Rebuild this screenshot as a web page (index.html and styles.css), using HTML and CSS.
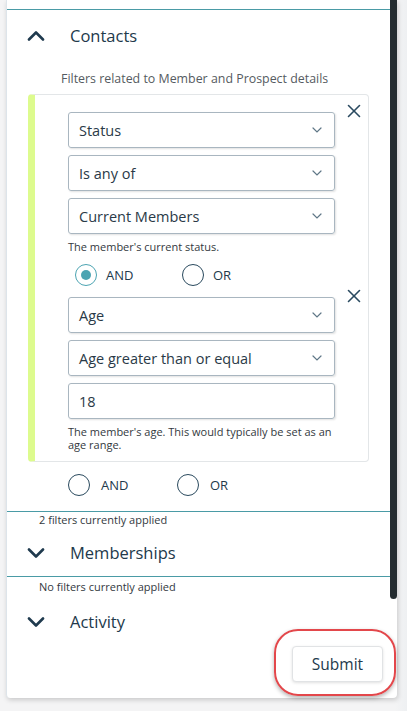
FILE: index.html
```html
<!DOCTYPE html>
<html>
<head>
<meta charset="utf-8">
<link rel="stylesheet" href="styles.css">
</head>
<body>
<div class="panel">
  <div class="top-gap"></div>

  <section class="section">
    <div class="sec-head">
      <svg class="chev" width="18" height="11" viewBox="0 0 18 11"><polyline points="2,9.5 9,2.5 16,9.5" /></svg>
      <span class="sec-title">Contacts</span>
    </div>
    <div class="sec-desc">Filters related to Member and Prospect details</div>

    <div class="card">
      <div class="group">
        <div class="fields">
          <div class="select"><span>Status</span><svg width="10" height="6" viewBox="0 0 10 6"><polyline points="1,1 5,5 9,1"/></svg></div>
          <div class="select"><span>Is any of</span><svg width="10" height="6" viewBox="0 0 10 6"><polyline points="1,1 5,5 9,1"/></svg></div>
          <div class="select"><span>Current Members</span><svg width="10" height="6" viewBox="0 0 10 6"><polyline points="1,1 5,5 9,1"/></svg></div>
          <div class="help">The member's current status.</div>
        </div>
        <svg class="close" width="14" height="14" viewBox="0 0 14 14"><line x1="1.5" y1="1.5" x2="12.5" y2="12.5"/><line x1="12.5" y1="1.5" x2="1.5" y2="12.5"/></svg>
      </div>

      <div class="radios inner">
        <label class="radio"><span class="dot checked"></span>AND</label>
        <label class="radio"><span class="dot"></span>OR</label>
      </div>

      <div class="group">
        <div class="fields">
          <div class="select"><span>Age</span><svg width="10" height="6" viewBox="0 0 10 6"><polyline points="1,1 5,5 9,1"/></svg></div>
          <div class="select"><span>Age greater than or equal</span><svg width="10" height="6" viewBox="0 0 10 6"><polyline points="1,1 5,5 9,1"/></svg></div>
          <div class="select input"><span>18</span></div>
          <div class="help">The member's age. This would typically be set as an age range.</div>
        </div>
        <svg class="close" width="14" height="14" viewBox="0 0 14 14"><line x1="1.5" y1="1.5" x2="12.5" y2="12.5"/><line x1="12.5" y1="1.5" x2="1.5" y2="12.5"/></svg>
      </div>
    </div>

    <div class="radios outer">
      <label class="radio"><span class="dot"></span>AND</label>
      <label class="radio"><span class="dot"></span>OR</label>
    </div>
  </section>

  <section class="section">
    <div class="applied">2 filters currently applied</div>
    <div class="sec-head short">
      <svg class="chev" width="18" height="11" viewBox="0 0 18 11"><polyline points="2,2.5 9,9.5 16,2.5" /></svg>
      <span class="sec-title">Memberships</span>
    </div>
  </section>

  <section class="section">
    <div class="applied tall">No filters currently applied</div>
    <div class="sec-head short">
      <svg class="chev" width="18" height="11" viewBox="0 0 18 11"><polyline points="2,2.5 9,9.5 16,2.5" /></svg>
      <span class="sec-title">Activity</span>
    </div>
  </section>

  <div class="actions">
    <div class="btn-wrap">
      <button class="submit">Submit</button>
      <div class="ring"></div>
    </div>
  </div>

  <div class="scrollbar"></div>
</div>
</body>
</html>
```

FILE: styles.css
```css
* { box-sizing: border-box; }
html, body { margin: 0; padding: 0; }
body {
  background: linear-gradient(90deg, #f4f4f5 0, #f4f4f5 97%, #eef0f2 100%);
  font-family: "Open Sans", "Noto Sans", sans-serif;
  color: #22394b;
  width: 407px;
  height: 711px;
  overflow: hidden;
}
.panel {
  position: relative;
  margin-left: 6px;
  width: 391px;
  height: 698px;
  background: #fff;
  border-left: 1px solid #dde4ea;
  border-radius: 0 0 4px 4px;
  box-shadow: 1px 2px 5px rgba(0, 0, 0, 0.18);
}
.top-gap { height: 9px; }
.section { border-top: 1px solid #4a9ba6; margin-right: 7px; }
.sec-head {
  height: 50px;
  display: flex;
  align-items: center;
  padding-left: 20px;
}
.sec-head.short { height: 48px; }
.chev { fill: none; stroke: #1f3a4e; stroke-width: 2.6; stroke-linecap: round; stroke-linejoin: round; }
.sec-title {
  margin-left: 25px;
  font-size: 16.5px;
  color: #22394b;
}
.sec-desc {
  height: 34px;
  line-height: 37px;
  padding-left: 54px;
  font-size: 12.4px;
  color: #555b61;
}
.card {
  margin-left: 21px;
  width: 341px;
  border: 1px solid #e3e6e8;
  border-left: 7px solid #ddfb8e;
  border-radius: 4px;
  padding: 17px 0 10px 33px;
}
.group { display: flex; align-items: flex-start; }
.fields { width: 267px; display: flex; flex-direction: column; gap: 7px; }
.select {
  height: 36px;
  border: 1px solid #a9b6c0;
  border-radius: 3px;
  box-shadow: 1px 1px 2px rgba(0, 0, 0, 0.12);
  display: flex;
  align-items: center;
  justify-content: space-between;
  padding: 0 12px 0 10px;
  font-size: 14.5px;
  color: #2a3a47;
}
.select svg { fill: none; stroke: #5f7787; stroke-width: 1.2; stroke-linecap: round; }
.help {
  margin-top: -1px;
  font-size: 11px;
  line-height: 13px;
  color: #33393e;
}
.close {
  margin: -8px 0 0 12px;
  fill: none;
  stroke: #2a4a60;
  stroke-width: 1.6;
  stroke-linecap: round;
}
.radios { display: flex; align-items: center; height: 22px; }
.radios.inner { margin: 11px 0 11px 7px; }
.radios.outer { margin: 12px 0 15px 61px; }
.radio {
  display: flex;
  align-items: center;
  font-size: 13px;
  color: #22394b;
}
.radios.inner .radio:first-child { width: 107px; }
.radios.outer .radio:first-child { width: 109px; }
.dot {
  width: 22px;
  height: 22px;
  border-radius: 50%;
  border: 1.5px solid #2a4a5e;
  margin-right: 9px;
  position: relative;
  background: #fff;
}
.radios.outer .dot { margin-right: 11px; }
.dot.checked { border-color: #4ca4b2; }
.dot.checked::after {
  content: "";
  position: absolute;
  left: 4.5px; top: 4.5px;
  width: 10px; height: 10px;
  border-radius: 50%;
  background: #4ca4b2;
}
.applied {
  height: 16px;
  line-height: 16px;
  padding-left: 32px;
  font-size: 11px;
  color: #33393e;
}
.applied.tall { height: 20px; line-height: 20px; }
.actions {
  display: flex;
  justify-content: flex-end;
  padding: 1px 14px 0 0;
}
.btn-wrap { position: relative; }
.submit {
  width: 91px;
  height: 36px;
  background: #fff;
  border: 1px solid #e1e3e5;
  border-radius: 4px;
  box-shadow: 0 1px 3px rgba(0, 0, 0, 0.12);
  font-family: "Open Sans", "Noto Sans", sans-serif;
  font-size: 15.5px;
  color: #22394b;
  padding: 0;
}
.ring {
  position: absolute;
  left: -18px; top: -17px; right: -13px; bottom: -14px;
  border: 2.5px solid #e3474b;
  border-radius: 24px;
  box-shadow: 0 2px 4px rgba(0, 0, 0, 0.3);
  pointer-events: none;
}
.scrollbar {
  position: absolute;
  top: 0; right: 0;
  width: 7px;
  height: 599px;
  background: #242c30;
  border-radius: 0 0 4px 4px;
}
```
